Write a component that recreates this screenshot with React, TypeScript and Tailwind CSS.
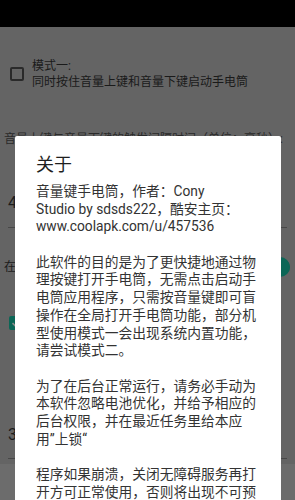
import React from "react";

const font = { fontFamily: '"Roboto", "Noto Sans CJK SC", sans-serif' };

const lines: string[] = [
  "音量键手电筒，作者：Cony",
  "Studio by sdsds222，酷安主页：",
  "www.coolapk.com/u/457536",
  "",
  "此软件的目的是为了更快捷地通过物",
  "理按键打开手电筒，无需点击启动手",
  "电筒应用程序，只需按音量键即可盲",
  "操作在全局打开手电筒功能，部分机",
  "型使用模式一会出现系统内置功能，",
  "请尝试模式二。",
  "",
  "为了在后台正常运行，请务必手动为",
  "本软件忽略电池优化，并给予相应的",
  "后台权限，并在最近任务里给本应",
  "用”上锁“",
  "",
  "程序如果崩溃，关闭无障碍服务再打",
  "开方可正常使用，否则将出现不可预",
];

export default function App() {
  return (
    <div className="relative w-[295px] h-[500px] overflow-hidden bg-[#646464]" style={font}>
      <div className="h-[27px] bg-black" />
      <div className="flex flex-col">
        {/* Mode one */}
        <div className="mt-[31px] flex items-center pl-[10px] gap-[8px]">
          <div className="w-[14px] h-[14px] rounded-[2px] border-2 border-[#2a2a2a]" />
          <div className="text-[12px] leading-[16px] text-[#1a1a1a]">
            <div>模式一:</div>
            <div>同时按住音量上键和音量下键启动手电筒</div>
          </div>
        </div>
        <div className="mt-[41px] pl-[4px] text-[12px] leading-[16px] text-[#2a2a2a] whitespace-nowrap">
          音量上键与音量下键的触发间隔时间（单位：毫秒）:
        </div>
        <div className="mt-[46px] mx-[8px] border-b border-[#474747] pb-[14px] text-[16px] leading-[20px] text-[#1c1c1c]">
          4
        </div>
        <div className="mt-[31px] flex items-center justify-between pl-[4px] pr-[5px]">
          <div className="text-[12px] leading-[16px] text-[#1c1c1c]">在后台</div>
          <div className="relative w-[34px] h-[14px] rounded-full bg-[#2d5a52]">
            <div className="absolute right-0 top-[-3px] w-[20px] h-[20px] rounded-full bg-[#0b6656]" />
          </div>
        </div>
        <div className="mt-[41px] flex items-center pl-[9px] gap-[8px]">
          <div className="w-[14px] h-[14px] rounded-[2px] bg-[#0b6656] flex items-center justify-center">
            <svg width="10" height="10" viewBox="0 0 10 10">
              <path d="M1.5 5.2 L4 7.6 L8.6 2.6" stroke="#8a8a8a" strokeWidth="1.6" fill="none" />
            </svg>
          </div>
        </div>
        <div className="mt-[95px] mx-[8px] border-b border-[#474747] pb-[13px] text-[16px] leading-[20px] text-[#1c1c1c]">
          3
        </div>
        <div className="mt-[5px] h-[40px] bg-[#6c6c6c]" />
      </div>

      {/* Dialog */}
      <div className="absolute left-[15px] top-[136px] w-[266px] h-[400px] bg-white rounded-[2px] pl-[21px] pt-[17px]">
        <div className="text-[18px] leading-[24px] text-[#1f1f1f]">关于</div>
        <div className="mt-[6px] text-[13.75px] leading-[17.7px] text-[#333333]">
          {lines.map((l, i) => (
            <div key={i} className="whitespace-nowrap h-[17.7px]">
              {l}
            </div>
          ))}
        </div>
      </div>
    </div>
  );
}
